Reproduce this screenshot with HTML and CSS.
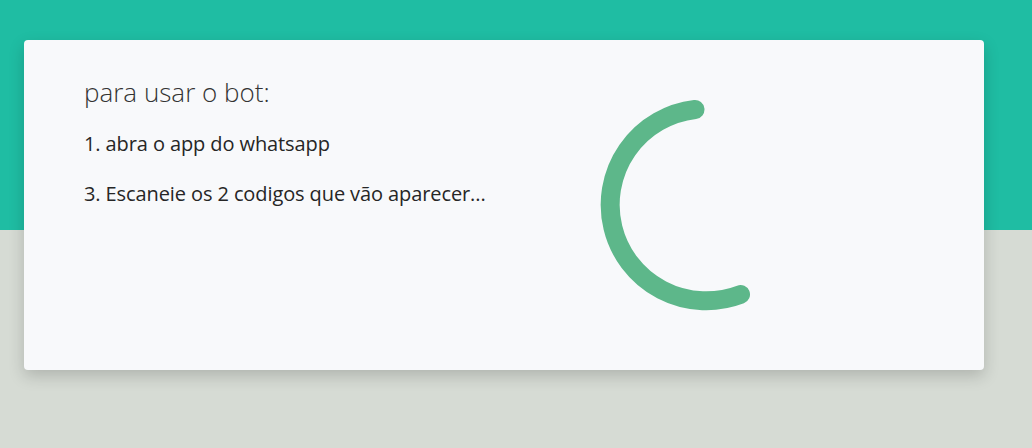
FILE: index.html
```html
<!DOCTYPE html>
<html lang="pt">
<head>
<meta charset="utf-8">
<title>bot</title>
<link rel="stylesheet" href="styles.css">
</head>
<body>
<main class="card">
  <section class="steps">
    <h1 class="title">para usar o bot:</h1>
    <p class="step">1. abra o app do whatsapp</p>
    <p class="step">3. Escaneie os 2 codigos que vão aparecer...</p>
  </section>
  <div class="loader">
    <svg width="220" height="220" viewBox="0 0 220 220" aria-hidden="true">
      <path d="M100 14.5 A96 96 0 1 0 145.5 199.5" fill="none" stroke="#5db78a" stroke-width="19" stroke-linecap="round"/>
    </svg>
  </div>
</main>
</body>
</html>
```
FILE: styles.css
```css
html, body {
  margin: 0;
  padding: 0;
}
body {
  width: 1032px;
  height: 448px;
  overflow: hidden;
  background: linear-gradient(to bottom, #1fbda3 0, #1fbda3 230px, #d6dbd4 230px, #d6dbd4 100%);
  font-family: "Open Sans", Lato, sans-serif;
  color: #262626;
  padding-top: 40px;
  box-sizing: border-box;
}
.card {
  width: 960px;
  height: 330px;
  margin-left: 24px;
  box-sizing: border-box;
  background: #f8f9fb;
  border-radius: 4px;
  box-shadow: 0 6px 16px rgba(0, 0, 0, 0.18);
  display: grid;
  grid-template-columns: 511px 220px;
  padding: 37px 0 0 60px;
}
.steps {
  display: flex;
  flex-direction: column;
}
.title {
  margin: 0 0 25px;
  font-size: 26px;
  line-height: 30px;
  font-weight: 300;
  color: #333;
}
.step {
  margin: 0 0 26px;
  font-size: 20px;
  line-height: 24px;
  font-weight: 500;
  letter-spacing: -0.1px;
}
.loader {
  align-self: start;
  margin-top: 18px;
}
.loader svg {
  display: block;
}
```
